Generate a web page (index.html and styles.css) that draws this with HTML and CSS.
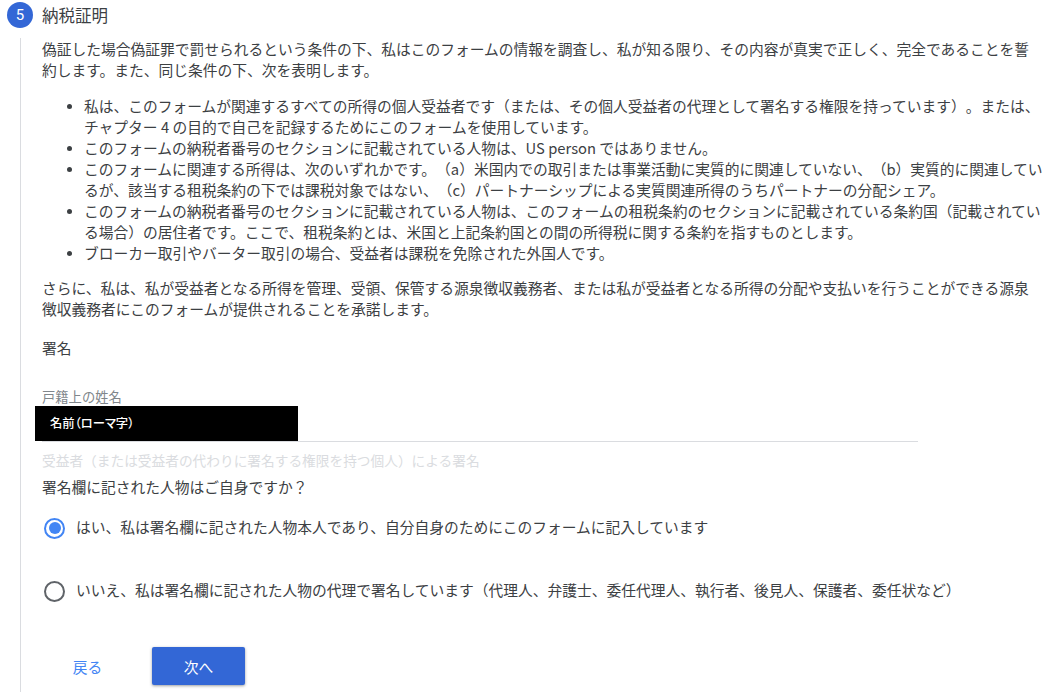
FILE: index.html
```html
<!DOCTYPE html>
<html lang="ja">
<head>
<meta charset="utf-8">
<title>納税証明</title>
<link rel="stylesheet" href="styles.css">
</head>
<body>
<main class="page">
  <header class="step-head">
    <span class="step-num">5</span>
    <h2 class="step-title">納税証明</h2>
  </header>
  <section class="step-body">
    <p class="para">偽証した場合偽証罪で罰せられるという条件の下、私はこのフォームの情報を調査し、私が知る限り、その内容が真実で正しく、完全であることを誓約します。また、同じ条件の下、次を表明します。</p>
    <ul class="list">
      <li>私は、このフォームが関連するすべての所得の個人受益者です（または、その個人受益者の代理として署名する権限を持っています）。または、チャプター 4 の目的で自己を記録するためにこのフォームを使用しています。</li>
      <li>このフォームの納税者番号のセクションに記載されている人物は、US person ではありません。</li>
      <li>このフォームに関連する所得は、次のいずれかです。（a）米国内での取引または事業活動に実質的に関連していない、（b）実質的に関連しているが、該当する租税条約の下では課税対象ではない、（c）パートナーシップによる実質関連所得のうちパートナーの分配シェア。</li>
      <li>このフォームの納税者番号のセクションに記載されている人物は、このフォームの租税条約のセクションに記載されている条約国（記載されている場合）の居住者です。ここで、租税条約とは、米国と上記条約国との間の所得税に関する条約を指すものとします。</li>
      <li>ブローカー取引やバーター取引の場合、受益者は課税を免除された外国人です。</li>
    </ul>
    <p class="para">さらに、私は、私が受益者となる所得を管理、受領、保管する源泉徴収義務者、または私が受益者となる所得の分配や支払いを行うことができる源泉徴収義務者にこのフォームが提供されることを承諾します。</p>
    <p class="sign-title">署名</p>
    <div class="field">
      <div class="field-label">戸籍上の姓名</div>
      <div class="field-input"><span class="redact">名前（ローマ字）</span></div>
      <div class="field-hint">受益者（または受益者の代わりに署名する権限を持つ個人）による署名</div>
    </div>
    <p class="question">署名欄に記された人物はご自身ですか？</p>
    <div class="radio-row radio-first">
      <span class="radio radio-on"></span>
      <span class="radio-text">はい、私は署名欄に記された人物本人であり、自分自身のためにこのフォームに記入しています</span>
    </div>
    <div class="radio-row radio-second">
      <span class="radio"></span>
      <span class="radio-text">いいえ、私は署名欄に記された人物の代理で署名しています（代理人、弁護士、委任代理人、執行者、後見人、保護者、委任状など）</span>
    </div>
    <div class="actions">
      <button class="btn-back" type="button">戻る</button>
      <button class="btn-next" type="button">次へ</button>
    </div>
  </section>
</main>
</body>
</html>
```
FILE: styles.css
```css
* { box-sizing: border-box; }
html, body { margin: 0; padding: 0; background: #fff; }
body {
  width: 1056px;
  height: 697px;
  overflow: hidden;
  font-family: "Noto Sans CJK JP", Roboto, sans-serif;
  color: #3c4043;
  font-size: 14.75px;
  text-spacing-trim: space-all;
}
.page { padding: 2px 0 0 7px; }
.step-head { display: flex; align-items: center; gap: 9px; height: 26px; }
.step-num {
  width: 26px; height: 26px; border-radius: 50%;
  background: #3367d6; color: #fff;
  display: flex; align-items: center; justify-content: center;
  font-family: Roboto, sans-serif; font-size: 15px;
}
.step-title { margin: 0; font-size: 16.5px; font-weight: 400; line-height: 24px; }
.step-body {
  margin: 10px 0 0 13px;
  width: 1032px;
  height: 654px;
  border-left: 1px solid #dadce0;
  padding: 0 0 0 21px;
  line-height: 21px;
}
.para { margin: 0; width: 1000px; }
.list { margin: 15px 0 14px; padding: 0 0 0 42px; width: 1006px; }
.list li { padding: 0; }
.list li::marker { font-size: 13px; }
.sign-title { margin: 18px 0 0; }
.field { margin-top: 30px; width: 876px; }
.field-label { color: #80868b; font-size: 13.3px; line-height: 18px; }
.field-input { height: 36px; border-bottom: 1px solid #dadce0; }
.redact {
  display: block;
  width: 263px; height: 35px;
  margin-left: -7px;
  background: #000; color: #fff;
  padding-left: 15px;
  font-size: 12.3px; line-height: 34px; font-weight: 500;
  font-feature-settings: "palt";
}
.field-hint { margin-top: 9px; color: #dadce0; font-size: 13.7px; line-height: 18px; }
.question { margin: 7px 0 0; }
.radio-row { display: flex; align-items: center; gap: 11px; height: 22px; }
.radio-first { margin-top: 18px; }
.radio-second { margin-top: 41px; }
.radio {
  flex: none;
  width: 21px; height: 21px; margin-left: 2px;
  border: 2px solid #5f6368; border-radius: 50%;
  position: relative; top: 2px;
}
.radio-on { border-color: #4285f4; }
.radio-on::after {
  content: ""; position: absolute; inset: 2.5px;
  border-radius: 50%; background: #4285f4;
}
.actions { display: flex; align-items: center; margin-top: 47px; gap: 41px; }
button { font-family: inherit; border: 0; font-size: 14.75px; }
.btn-back { background: none; color: #4285f4; padding: 0; margin-left: 22px; width: 47px; }
.btn-next {
  width: 93px; height: 38px;
  background: #3367d6; color: #fff; border-radius: 2px;
  box-shadow: 0 1px 3px rgba(60,64,67,.5);
}
```
